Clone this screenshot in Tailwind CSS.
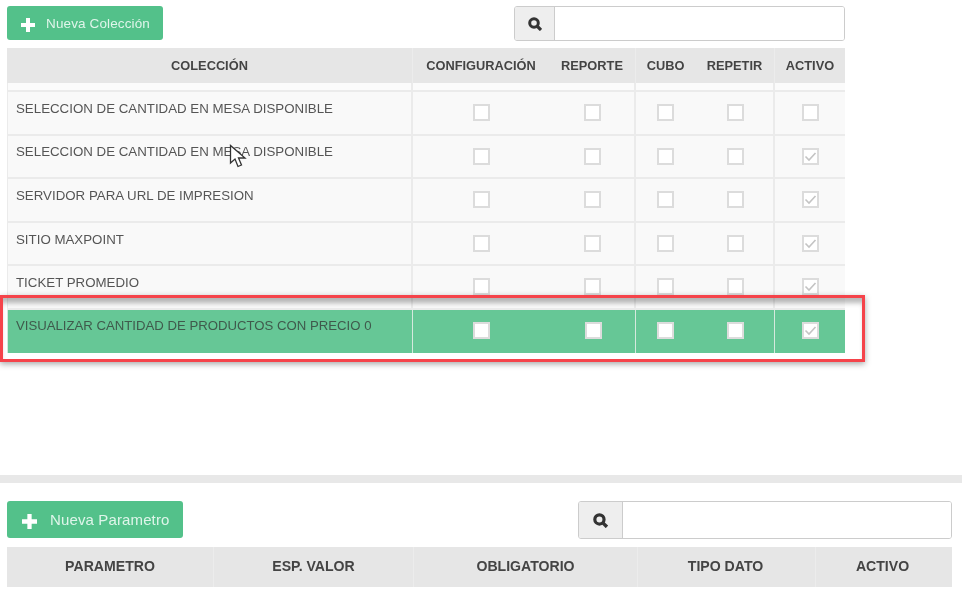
<!DOCTYPE html>
<html lang="es">
<head>
    <meta charset="UTF-8">
    <title>Colecciones</title>
    <script src="https://cdn.jsdelivr.net/npm/@tailwindcss/browser@4"></script>
</head>
<body class="bg-white font-['Liberation_Sans',sans-serif] text-[#555]">
<div class="relative w-[962px] h-[593px] overflow-hidden blur-[0.5px]">

    <!-- colecciones -->
    <div class="h-[475px] px-[7px] pt-[6px]">
        <div class="flex justify-between w-[838px] h-[35px]">
            <button class="flex items-center w-[156px] h-[34px] rounded-[3px] bg-[#53c18a] pl-[14px] pt-[2px] text-[#dff5ea] text-[13.5px] tracking-[0.13px]">
                <svg class="w-[14px] h-[14px] mr-[11px] mt-[2px]" viewBox="0 0 14 14"><path d="M5 0h4v5h5v4H9v5H5V9H0V5h5z" fill="#fff"/></svg>
                Nueva Colección
            </button>
            <div class="flex w-[331px] h-[35px] rounded-[3px] border border-[#ccc] overflow-hidden">
                <span class="flex items-center justify-center w-[40px] bg-[#eee] border-r border-[#ccc]">
                    <svg class="w-[14px] h-[14px]" viewBox="0 0 14 14" fill="none" stroke="#333"><circle cx="6" cy="6" r="4.3" stroke-width="3"/><path d="M9 9l4 4" stroke-width="3.2"/></svg>
                </span>
                <input class="flex-1 bg-white">
            </div>
        </div>

        <div class="mt-[7px] w-[838px]">
            <div class="grid grid-cols-[406px_136px_87px_59px_80px_70px] h-[35px] bg-[#e6e6e6] text-[#444] text-[12.8px] font-bold">
                <div class="flex items-center justify-center border-r border-[#ececec]">COLECCIÓN</div>
                <div class="flex items-center justify-center">CONFIGURACIÓN</div>
                <div class="flex items-center justify-center border-r border-[#ececec]">REPORTE</div>
                <div class="flex items-center justify-center">CUBO</div>
                <div class="flex items-center justify-center border-r border-[#ececec]">REPETIR</div>
                <div class="flex items-center justify-center">ACTIVO</div>
            </div>

            <div class="grid grid-cols-[405px_136px_87px_59px_80px_70px] h-[9px] bg-[#fbfbfb] border-b-2 border-l border-[#ebebeb]">
                <div class="border-r-2 border-[#ebebeb]"></div><div></div>
                <div class="border-r-2 border-[#ebebeb]"></div><div></div>
                <div class="border-r-2 border-[#ebebeb]"></div><div></div>
            </div>

            <div class="grid grid-cols-[405px_136px_87px_59px_80px_70px] h-[43.5px] bg-[#f9f9f9] border-b-2 border-l border-[#ebebeb] text-[13.3px]">
                <div class="pl-[8px] pt-[7.5px] leading-[18px] border-r-2 border-[#ebebeb]">SELECCION DE CANTIDAD EN MESA DISPONIBLE</div>
                <div class="flex justify-center pt-[12px]"><span class="w-[17px] h-[17px] bg-white border-2 border-[#dcdcdc]"></span></div>
                <div class="flex justify-center pt-[12px] pl-[2px] border-r-2 border-[#ebebeb]"><span class="w-[17px] h-[17px] bg-white border-2 border-[#dcdcdc]"></span></div>
                <div class="flex justify-center pt-[12px]"><span class="w-[17px] h-[17px] bg-white border-2 border-[#dcdcdc]"></span></div>
                <div class="flex justify-center pt-[12px] pl-[2px] border-r-2 border-[#ebebeb]"><span class="w-[17px] h-[17px] bg-white border-2 border-[#dcdcdc]"></span></div>
                <div class="flex justify-center pt-[12px]"><span class="w-[17px] h-[17px] bg-white border-2 border-[#dcdcdc]"></span></div>
            </div>

            <div class="grid grid-cols-[405px_136px_87px_59px_80px_70px] h-[43.5px] bg-[#f9f9f9] border-b-2 border-l border-[#ebebeb] text-[13.3px]">
                <div class="pl-[8px] pt-[7.5px] leading-[18px] border-r-2 border-[#ebebeb]">SELECCION DE CANTIDAD EN MESA DISPONIBLE</div>
                <div class="flex justify-center pt-[12px]"><span class="w-[17px] h-[17px] bg-white border-2 border-[#dcdcdc]"></span></div>
                <div class="flex justify-center pt-[12px] pl-[2px] border-r-2 border-[#ebebeb]"><span class="w-[17px] h-[17px] bg-white border-2 border-[#dcdcdc]"></span></div>
                <div class="flex justify-center pt-[12px]"><span class="w-[17px] h-[17px] bg-white border-2 border-[#dcdcdc]"></span></div>
                <div class="flex justify-center pt-[12px] pl-[2px] border-r-2 border-[#ebebeb]"><span class="w-[17px] h-[17px] bg-white border-2 border-[#dcdcdc]"></span></div>
                <div class="flex justify-center pt-[12px]"><span class="w-[17px] h-[17px] bg-white border-2 border-[#dcdcdc]"><svg class="w-[13px] h-[13px]" viewBox="0 0 13 13" fill="none"><path d="M1.5 6.5l3.500 3.500 6.500-7" stroke="#c4c4c4" stroke-width="1.6"/></svg></span></div>
            </div>

            <div class="grid grid-cols-[405px_136px_87px_59px_80px_70px] h-[43.5px] bg-[#f9f9f9] border-b-2 border-l border-[#ebebeb] text-[13.3px]">
                <div class="pl-[8px] pt-[7.5px] leading-[18px] border-r-2 border-[#ebebeb]">SERVIDOR PARA URL DE IMPRESION</div>
                <div class="flex justify-center pt-[12px]"><span class="w-[17px] h-[17px] bg-white border-2 border-[#dcdcdc]"></span></div>
                <div class="flex justify-center pt-[12px] pl-[2px] border-r-2 border-[#ebebeb]"><span class="w-[17px] h-[17px] bg-white border-2 border-[#dcdcdc]"></span></div>
                <div class="flex justify-center pt-[12px]"><span class="w-[17px] h-[17px] bg-white border-2 border-[#dcdcdc]"></span></div>
                <div class="flex justify-center pt-[12px] pl-[2px] border-r-2 border-[#ebebeb]"><span class="w-[17px] h-[17px] bg-white border-2 border-[#dcdcdc]"></span></div>
                <div class="flex justify-center pt-[12px]"><span class="w-[17px] h-[17px] bg-white border-2 border-[#dcdcdc]"><svg class="w-[13px] h-[13px]" viewBox="0 0 13 13" fill="none"><path d="M1.5 6.5l3.500 3.500 6.500-7" stroke="#c4c4c4" stroke-width="1.6"/></svg></span></div>
            </div>

            <div class="grid grid-cols-[405px_136px_87px_59px_80px_70px] h-[43.5px] bg-[#f9f9f9] border-b-2 border-l border-[#ebebeb] text-[13.3px]">
                <div class="pl-[8px] pt-[8px] leading-[18px] border-r-2 border-[#ebebeb]">SITIO MAXPOINT</div>
                <div class="flex justify-center pt-[12px]"><span class="w-[17px] h-[17px] bg-white border-2 border-[#dcdcdc]"></span></div>
                <div class="flex justify-center pt-[12px] pl-[2px] border-r-2 border-[#ebebeb]"><span class="w-[17px] h-[17px] bg-white border-2 border-[#dcdcdc]"></span></div>
                <div class="flex justify-center pt-[12px]"><span class="w-[17px] h-[17px] bg-white border-2 border-[#dcdcdc]"></span></div>
                <div class="flex justify-center pt-[12px] pl-[2px] border-r-2 border-[#ebebeb]"><span class="w-[17px] h-[17px] bg-white border-2 border-[#dcdcdc]"></span></div>
                <div class="flex justify-center pt-[12px]"><span class="w-[17px] h-[17px] bg-white border-2 border-[#dcdcdc]"><svg class="w-[13px] h-[13px]" viewBox="0 0 13 13" fill="none"><path d="M1.5 6.5l3.500 3.500 6.500-7" stroke="#c4c4c4" stroke-width="1.6"/></svg></span></div>
            </div>

            <div class="grid grid-cols-[405px_136px_87px_59px_80px_70px] h-[44px] bg-[#f9f9f9] border-b-2 border-l border-[#ebebeb] text-[13.3px]">
                <div class="pl-[8px] pt-[7.5px] leading-[18px] border-r-2 border-[#ebebeb]">TICKET PROMEDIO</div>
                <div class="flex justify-center pt-[12px]"><span class="w-[17px] h-[17px] bg-white border-2 border-[#dcdcdc]"></span></div>
                <div class="flex justify-center pt-[12px] pl-[2px] border-r-2 border-[#ebebeb]"><span class="w-[17px] h-[17px] bg-white border-2 border-[#dcdcdc]"></span></div>
                <div class="flex justify-center pt-[12px]"><span class="w-[17px] h-[17px] bg-white border-2 border-[#dcdcdc]"></span></div>
                <div class="flex justify-center pt-[12px] pl-[2px] border-r-2 border-[#ebebeb]"><span class="w-[17px] h-[17px] bg-white border-2 border-[#dcdcdc]"></span></div>
                <div class="flex justify-center pt-[12px]"><span class="w-[17px] h-[17px] bg-white border-2 border-[#dcdcdc]"><svg class="w-[13px] h-[13px]" viewBox="0 0 13 13" fill="none"><path d="M1.5 6.5l3.500 3.500 6.500-7" stroke="#c4c4c4" stroke-width="1.6"/></svg></span></div>
            </div>

            <div class="grid grid-cols-[405px_136px_87px_59px_80px_70px] h-[43px] bg-[#66c796] border-l border-[#d5e9de] text-[#3f5a4c] text-[13.18px]">
                <div class="pl-[8px] pt-[7px] leading-[18px] border-r border-[#d5e9de]">VISUALIZAR CANTIDAD DE PRODUCTOS CON PRECIO 0</div>
                <div class="flex justify-center pt-[12px]"><span class="w-[17px] h-[17px] bg-white border-2 border-[#dcdcdc]"></span></div>
                <div class="flex justify-center pt-[12px] pl-[2px] border-r border-[#d5e9de]"><span class="w-[17px] h-[17px] bg-white border-2 border-[#dcdcdc]"></span></div>
                <div class="flex justify-center pt-[12px]"><span class="w-[17px] h-[17px] bg-white border-2 border-[#dcdcdc]"></span></div>
                <div class="flex justify-center pt-[12px] pl-[2px] border-r border-[#d5e9de]"><span class="w-[17px] h-[17px] bg-white border-2 border-[#dcdcdc]"></span></div>
                <div class="flex justify-center pt-[12px]"><span class="w-[17px] h-[17px] bg-white border-2 border-[#dcdcdc]"><svg class="w-[13px] h-[13px]" viewBox="0 0 13 13" fill="none"><path d="M1.5 6.5l3.500 3.500 6.500-7" stroke="#c4c4c4" stroke-width="1.6"/></svg></span></div>
            </div>
        </div>
    </div>

    <div class="h-[8px] bg-[#e8e8e8]"></div>

    <!-- parametros -->
    <div class="px-[7px] pt-[18px]">
        <div class="flex justify-between w-[945px] h-[38px]">
            <button class="flex items-center w-[176px] h-[37px] rounded-[3px] bg-[#53c18a] pl-[15px] pt-[2px] text-[#dff5ea] text-[15px] tracking-[0.13px]">
                <svg class="w-[15px] h-[15px] mr-[13px] mt-[2px]" viewBox="0 0 14 14"><path d="M5 0h4v5h5v4H9v5H5V9H0V5h5z" fill="#fff"/></svg>
                Nueva Parametro
            </button>
            <div class="flex w-[374px] h-[38px] rounded-[3px] border border-[#ccc] overflow-hidden">
                <span class="flex items-center justify-center w-[44px] bg-[#eee] border-r border-[#ccc]">
                    <svg class="w-[15px] h-[15px]" viewBox="0 0 14 14" fill="none" stroke="#333"><circle cx="6" cy="6" r="4.3" stroke-width="3"/><path d="M9 9l4 4" stroke-width="3.2"/></svg>
                </span>
                <input class="flex-1 bg-white">
            </div>
        </div>
        <div class="mt-[8px] grid grid-cols-[207px_200px_224px_178px_136px] w-[945px] h-[40px] bg-[#e6e6e6] text-[#444] text-[14.1px] font-bold">
            <div class="flex items-center justify-center border-r border-[#ececec]">PARAMETRO</div>
            <div class="flex items-center justify-center border-r border-[#ececec]">ESP. VALOR</div>
            <div class="flex items-center justify-center border-r border-[#ececec]">OBLIGATORIO</div>
            <div class="flex items-center justify-center border-r border-[#ececec] pr-[2px]">TIPO DATO</div>
            <div class="flex items-center justify-center pr-[3px]">ACTIVO</div>
        </div>
    </div>

    <!-- recuadro rojo de la captura -->
    <div class="absolute left-[0px] top-[295px] w-[865px] h-[67px] border-[3px] border-[#f5434a] shadow-[0_2px_6px_rgba(0,0,0,0.35),inset_0_7px_5px_-2px_rgba(0,0,0,0.28)]"></div>

    <!-- cursor -->
    <svg class="absolute left-[229px] top-[144px] w-[18px] h-[26px]" viewBox="0 0 18 26"><path d="M1.5 1.5V19l4.500-4 3 7.500 3.500-1.500-3-7h6.500z" fill="#fff" stroke="#333" stroke-width="1.3"/></svg>
</div>
</body>
</html>
